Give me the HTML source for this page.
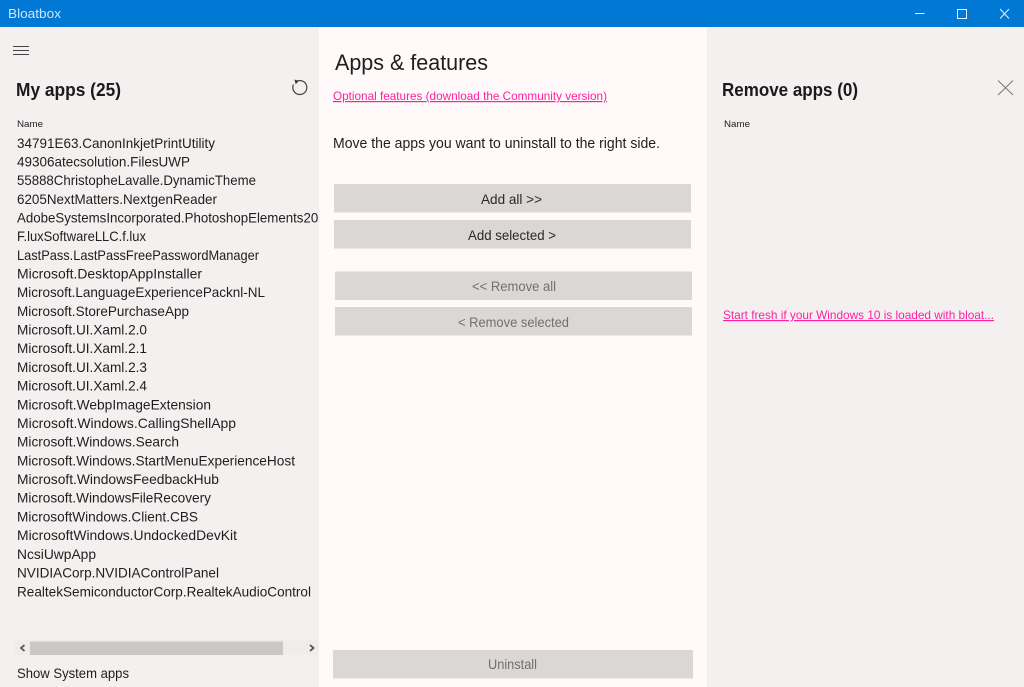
<!DOCTYPE html>
<html><head><meta charset="utf-8"><title>Bloatbox</title>
<style>
html,body{margin:0;padding:0;width:1024px;height:687px;overflow:hidden;background:#fff9f9}
svg{display:block}
text{font-family:"Liberation Sans",sans-serif;fill:#1e1e1e;filter:blur(.3px)}
</style></head><body>
<svg width="1024" height="687" viewBox="0 0 1024 687" xmlns="http://www.w3.org/2000/svg">
<defs><clipPath id="c"><rect x="0" y="100" width="319" height="530"/></clipPath></defs>
<rect width="1024" height="687" fill="#fff9f9"/>
<rect width="1024" height="27" fill="#0078d4"/>
<rect y="27" width="319" height="660" fill="#f4f0f0"/>
<rect x="707" y="27" width="317" height="660" fill="#f4f0f0"/>
<text x="8" y="18" font-size="13" textLength="53" lengthAdjust="spacingAndGlyphs" style="fill:#cfe6f8">Bloatbox</text>
<g stroke="#e8f3fc" fill="none" stroke-width="1">
<path d="M915 13.500h9.500"/><rect x="957.500" y="9.500" width="9" height="9"/><path d="M1000 9l9 9.500M1009 9l-9 9.500"/>
</g>
<g stroke="#444" stroke-width="1"><path d="M13 46.500h16M13 50.500h16M13 54.500h16"/></g>
<text x="16" y="96" font-size="18" textLength="105" lengthAdjust="spacingAndGlyphs" style="fill:#1a1a1a;font-weight:600">My apps (25)</text>
<path d="M297.500 80.900a7 7 0 1 1-4 3.600" fill="none" stroke="#444" stroke-width="1.200"/><path d="M294.500 79.500l4.200 1.500-3 3.200z" fill="#333"/>
<text x="17" y="127" font-size="9.500" textLength="26" lengthAdjust="spacingAndGlyphs">Name</text>
<g clip-path="url(#c)">
<text x="17" y="148" font-size="14" textLength="198" lengthAdjust="spacingAndGlyphs">34791E63.CanonInkjetPrintUtility</text>
<text x="17" y="166.500" font-size="14" textLength="173" lengthAdjust="spacingAndGlyphs">49306atecsolution.FilesUWP</text>
<text x="17" y="185" font-size="14" textLength="239" lengthAdjust="spacingAndGlyphs">55888ChristopheLavalle.DynamicTheme</text>
<text x="17" y="204" font-size="14" textLength="200" lengthAdjust="spacingAndGlyphs">6205NextMatters.NextgenReader</text>
<text x="17" y="222.500" font-size="14" textLength="316" lengthAdjust="spacingAndGlyphs">AdobeSystemsIncorporated.PhotoshopElements2020</text>
<text x="17" y="241" font-size="14" textLength="129" lengthAdjust="spacingAndGlyphs">F.luxSoftwareLLC.f.lux</text>
<text x="17" y="260" font-size="14" textLength="242" lengthAdjust="spacingAndGlyphs">LastPass.LastPassFreePasswordManager</text>
<text x="17" y="278.500" font-size="14" textLength="185" lengthAdjust="spacingAndGlyphs">Microsoft.DesktopAppInstaller</text>
<text x="17" y="297" font-size="14" textLength="248" lengthAdjust="spacingAndGlyphs">Microsoft.LanguageExperiencePacknl-NL</text>
<text x="17" y="316" font-size="14" textLength="172" lengthAdjust="spacingAndGlyphs">Microsoft.StorePurchaseApp</text>
<text x="17" y="334.500" font-size="14" textLength="130" lengthAdjust="spacingAndGlyphs">Microsoft.UI.Xaml.2.0</text>
<text x="17" y="353" font-size="14" textLength="130" lengthAdjust="spacingAndGlyphs">Microsoft.UI.Xaml.2.1</text>
<text x="17" y="372" font-size="14" textLength="130" lengthAdjust="spacingAndGlyphs">Microsoft.UI.Xaml.2.3</text>
<text x="17" y="390.500" font-size="14" textLength="130" lengthAdjust="spacingAndGlyphs">Microsoft.UI.Xaml.2.4</text>
<text x="17" y="409.500" font-size="14" textLength="194" lengthAdjust="spacingAndGlyphs">Microsoft.WebpImageExtension</text>
<text x="17" y="428" font-size="14" textLength="219" lengthAdjust="spacingAndGlyphs">Microsoft.Windows.CallingShellApp</text>
<text x="17" y="446.500" font-size="14" textLength="162" lengthAdjust="spacingAndGlyphs">Microsoft.Windows.Search</text>
<text x="17" y="465.500" font-size="14" textLength="278" lengthAdjust="spacingAndGlyphs">Microsoft.Windows.StartMenuExperienceHost</text>
<text x="17" y="484" font-size="14" textLength="202" lengthAdjust="spacingAndGlyphs">Microsoft.WindowsFeedbackHub</text>
<text x="17" y="502.500" font-size="14" textLength="194" lengthAdjust="spacingAndGlyphs">Microsoft.WindowsFileRecovery</text>
<text x="17" y="521.500" font-size="14" textLength="181" lengthAdjust="spacingAndGlyphs">MicrosoftWindows.Client.CBS</text>
<text x="17" y="540" font-size="14" textLength="220" lengthAdjust="spacingAndGlyphs">MicrosoftWindows.UndockedDevKit</text>
<text x="17" y="559" font-size="14" textLength="79" lengthAdjust="spacingAndGlyphs">NcsiUwpApp</text>
<text x="17" y="577.500" font-size="14" textLength="202" lengthAdjust="spacingAndGlyphs">NVIDIACorp.NVIDIAControlPanel</text>
<text x="17" y="596.500" font-size="14" textLength="294" lengthAdjust="spacingAndGlyphs">RealtekSemiconductorCorp.RealtekAudioControl</text>
</g>
<rect x="15" y="640" width="304" height="15" fill="#f0ecea"/>
<rect x="30" y="641.500" width="253" height="13.500" fill="#cbc7c6"/>
<path d="M24.500 645l-3.500 3 3.500 3M310 645l3.500 3-3.500 3" fill="none" stroke="#555" stroke-width="1.800"/>
<text x="17" y="678" font-size="14" textLength="112" lengthAdjust="spacingAndGlyphs">Show System apps</text>

<text x="335" y="70" font-size="22" textLength="153" lengthAdjust="spacingAndGlyphs">Apps &amp; features</text>
<text x="333" y="100" font-size="12" textLength="274" lengthAdjust="spacingAndGlyphs" style="fill:#ff1fa5;text-decoration:underline">Optional features (download the Community version)</text>
<text x="333" y="148" font-size="14.500" textLength="327" lengthAdjust="spacingAndGlyphs">Move the apps you want to uninstall to the right side.</text>
<g fill="#dbd7d5">
<rect x="334" y="184" width="357" height="28.500"/>
<rect x="334" y="220" width="357" height="28.500"/>
<rect x="335" y="271.500" width="357" height="28.500"/>
<rect x="335" y="307" width="357" height="28.500"/>
<rect x="333" y="650" width="360" height="28.500"/>
</g>
<text x="481" y="204" font-size="14" textLength="61" lengthAdjust="spacingAndGlyphs" style="fill:#2a2a2a">Add all &gt;&gt;</text>
<text x="468" y="240" font-size="14" textLength="88" lengthAdjust="spacingAndGlyphs" style="fill:#2a2a2a">Add selected &gt;</text>
<text x="472" y="291" font-size="14" textLength="84" lengthAdjust="spacingAndGlyphs" style="fill:#707070">&lt;&lt; Remove all</text>
<text x="458" y="327" font-size="14" textLength="111" lengthAdjust="spacingAndGlyphs" style="fill:#707070">&lt; Remove selected</text>
<text x="488" y="669" font-size="14" textLength="49" lengthAdjust="spacingAndGlyphs" style="fill:#707070">Uninstall</text>

<text x="722" y="96" font-size="18" textLength="136" lengthAdjust="spacingAndGlyphs" style="fill:#1a1a1a;font-weight:600">Remove apps (0)</text>
<path d="M998 80.500l15 14.500M1013 80.500l-15 14.500" stroke="#777" stroke-width="1" fill="none"/>
<text x="724" y="127" font-size="9.500" textLength="26" lengthAdjust="spacingAndGlyphs">Name</text>
<text x="723" y="319" font-size="12" textLength="271" lengthAdjust="spacingAndGlyphs" style="fill:#ff1fa5;text-decoration:underline">Start fresh if your Windows 10 is loaded with bloat...</text>
</svg>
</body></html>
